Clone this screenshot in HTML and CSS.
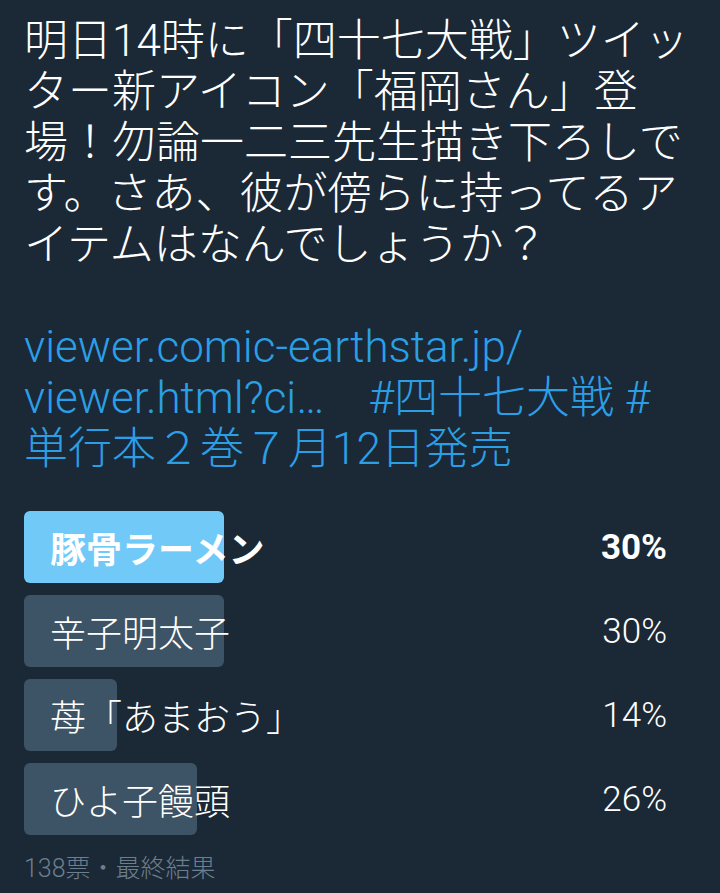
FILE: index.html
```html
<!DOCTYPE html>
<html>
    <head>
        <title>poll</title>
        <link rel="stylesheet" href="styles.css">
    </head>
    <body>
        <div class='tweet'>
            <p class='text'>明日14時に「四十七大戦」ツイッター新アイコン「福岡さん」登場！勿論一二三先生描き下ろしです。さあ、彼が傍らに持ってるアイテムはなんでしょうか？</p>
            <p class='links'><a href='#'>viewer.comic-earthstar.jp/<wbr>viewer.html?ci…</a><span class='gap'></span><a href='#'>#四十七大戦</a> <a href='#'>#<br>単行本２巻７月12日発売</a></p>
            <div class='poll'>
                <div class='choice winner'>
                    <span class='bar' style='width:30%'></span>
                    <span class='label'>豚骨ラーメン</span>
                    <span class='pct'>30%</span>
                </div>
                <div class='choice'>
                    <span class='bar' style='width:30%'></span>
                    <span class='label'>辛子明太子</span>
                    <span class='pct'>30%</span>
                </div>
                <div class='choice'>
                    <span class='bar' style='width:14%'></span>
                    <span class='label'>苺「あまおう」</span>
                    <span class='pct'>14%</span>
                </div>
                <div class='choice'>
                    <span class='bar' style='width:26%'></span>
                    <span class='label'>ひよ子饅頭</span>
                    <span class='pct'>26%</span>
                </div>
            </div>
            <p class='meta'>138票・最終結果</p>
        </div>
    </body>
</html>
```

FILE: styles.css
```css
body {
    background:#1b2836;
    margin:0;
    font-family:Roboto, 'Noto Sans CJK JP', sans-serif;
    color:#fff;
}
.tweet {
    width:667px;
    padding:16px 0 0 24px;
}
.text, .links {
    font-size:44px;
    line-height:51px;
    font-weight:300;
    margin:0;
}
.links {
    margin-top:51px;
}
.links a {
    color:#2b9fe6;
    text-decoration:none;
}
.gap {
    display:inline-block;
    width:44px;
}
.poll {
    margin-top:36px;
    display:flex;
    flex-direction:column;
    gap:12px;
}
.choice {
    position:relative;
    height:72px;
    display:flex;
    align-items:center;
    justify-content:space-between;
    padding:0 24px 0 26px;
    font-size:36px;
    font-weight:300;
}
.choice .bar {
    position:absolute;
    left:0;
    top:0;
    bottom:0;
    background:#3d5466;
    border-radius:6px;
}
.choice.winner .bar {
    background:#71c9f8;
}
.choice.winner {
    font-weight:700;
}
.label, .pct {
    position:relative;
}
.pct {
    font-size:35px;
}
.meta {
    margin:13px 0 0;
    font-size:25px;
    color:#6b7f8e;
    font-weight:300;
}
```
